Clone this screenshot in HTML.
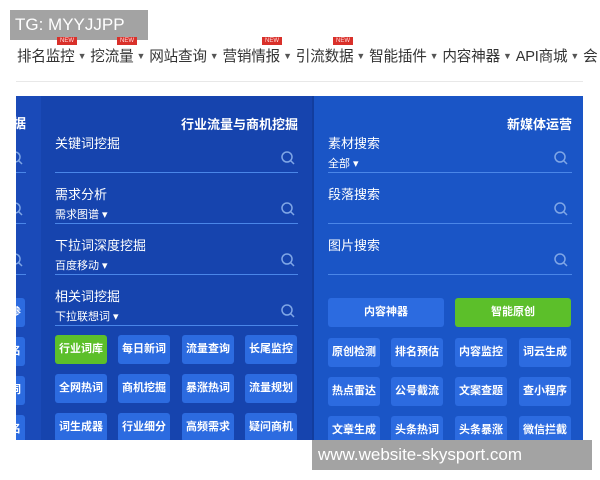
<!DOCTYPE html>
<html><head><meta charset="utf-8"><style>
*{margin:0;padding:0;box-sizing:border-box}
body{width:600px;height:480px;background:#fff;position:relative;overflow:hidden;font-family:"Liberation Sans","Noto Sans CJK SC",sans-serif}
.abs{position:absolute}
.tg{left:10px;top:10px;width:138px;height:30px;background:#a3a3a3;color:#fff;font-size:17px;line-height:30px;padding-left:5px}
.nav{left:17px;top:45px;font-size:14.6px;color:#333;white-space:nowrap;letter-spacing:-0.2px}
.nav .ar{font-size:9px;color:#555;margin:0 4px 0 3px;vertical-align:2px}
.badge{position:absolute;top:37px;width:20px;height:8px;background:#d9302a;font-size:6px;color:#fdd;line-height:8px;text-align:center}
.hline{left:16px;top:81px;width:567px;height:1px;background:#e8e8e8}
.left{left:16px;top:96px;width:25px;height:344px;background:#1a4ab8;overflow:hidden}
.mid{left:41px;top:96px;width:271px;height:344px;background:#1644ae}
.sep{left:312px;top:96px;width:2px;height:344px;background:#123d9e}
.right{left:314px;top:96px;width:269px;height:344px;background:#1a55c6}
.h{color:#fff;font-weight:bold;font-size:13px}
.lab{color:#fff;font-size:13px}
.dd{color:#fff;font-size:11px}
.ul{height:1px;background:#4a86e8}
.btn{background:#2c6be0;color:#fff;font-size:11px;font-weight:bold;text-align:center;line-height:29px;height:29px;border-radius:3px}
.g{background:#5cbf2a}
.ft{left:312px;top:440px;width:280px;height:30px;background:#a3a3a3;color:#fff;font-size:17px;line-height:30px;padding-left:6px}
svg.s{position:absolute;width:16px;height:16px}
</style></head><body>
<div class="abs tg">TG: MYYJJPP</div>
<div class="badge" style="left:57px">NEW</div>
<div class="badge" style="left:117px">NEW</div>
<div class="badge" style="left:262px">NEW</div>
<div class="badge" style="left:333px">NEW</div>
<div class="abs nav">排名监控<span class="ar">▼</span>挖流量<span class="ar">▼</span>网站查询<span class="ar">▼</span>营销情报<span class="ar">▼</span>引流数据<span class="ar">▼</span>智能插件<span class="ar">▼</span>内容神器<span class="ar">▼</span>API商城<span class="ar">▼</span>会</div>
<div class="abs hline"></div>
<div class="abs left">
<div class="abs h" style="left:-3px;top:17px">据</div>
<svg class="s" style="left:-8px;top:54px" viewBox="0 0 16 16"><circle cx="7" cy="7" r="5" fill="none" stroke="#7fa6e6" stroke-width="1.5"/><path d="M10.5 10.5L14 14" stroke="#7fa6e6" stroke-width="1.5"/></svg>
<svg class="s" style="left:-8px;top:105px" viewBox="0 0 16 16"><circle cx="7" cy="7" r="5" fill="none" stroke="#7fa6e6" stroke-width="1.5"/><path d="M10.5 10.5L14 14" stroke="#7fa6e6" stroke-width="1.5"/></svg>
<svg class="s" style="left:-8px;top:156px" viewBox="0 0 16 16"><circle cx="7" cy="7" r="5" fill="none" stroke="#7fa6e6" stroke-width="1.5"/><path d="M10.5 10.5L14 14" stroke="#7fa6e6" stroke-width="1.5"/></svg>
<div class="abs ul" style="left:0;top:76px;width:10px"></div>
<div class="abs ul" style="left:0;top:127px;width:10px"></div>
<div class="abs ul" style="left:0;top:178px;width:10px"></div>
<div class="abs btn" style="left:-43px;top:202px;width:52px">关键词参</div>
<div class="abs btn" style="left:-43px;top:241px;width:52px">关键排名</div>
<div class="abs btn" style="left:-43px;top:280px;width:52px">关键热词</div>
<div class="abs btn" style="left:-43px;top:319px;width:52px">关键排名</div>
</div>
<div class="abs mid"></div>
<div class="abs sep"></div>
<div class="abs right"></div>
<!-- mid panel -->
<div class="abs h" style="left:150px;top:114px;width:148px;text-align:right">行业流量与商机挖掘</div>
<div class="abs lab" style="left:55px;top:133px">关键词挖掘</div>
<div class="abs ul" style="left:55px;top:172px;width:243px"></div>
<div class="abs lab" style="left:55px;top:184px">需求分析</div>
<div class="abs dd" style="left:55px;top:206px">需求图谱 ▾</div>
<div class="abs ul" style="left:55px;top:223px;width:243px"></div>
<div class="abs lab" style="left:55px;top:235px">下拉词深度挖掘</div>
<div class="abs dd" style="left:55px;top:257px">百度移动 ▾</div>
<div class="abs ul" style="left:55px;top:274px;width:243px"></div>
<div class="abs lab" style="left:55px;top:286px">相关词挖掘</div>
<div class="abs dd" style="left:55px;top:308px">下拉联想词 ▾</div>
<div class="abs ul" style="left:55px;top:325px;width:243px"></div>
<svg class="s" style="left:280px;top:150px" viewBox="0 0 16 16"><circle cx="7" cy="7" r="5" fill="none" stroke="#7fa6e6" stroke-width="1.5"/><path d="M10.5 10.5L14 14" stroke="#7fa6e6" stroke-width="1.5"/></svg>
<svg class="s" style="left:280px;top:201px" viewBox="0 0 16 16"><circle cx="7" cy="7" r="5" fill="none" stroke="#7fa6e6" stroke-width="1.5"/><path d="M10.5 10.5L14 14" stroke="#7fa6e6" stroke-width="1.5"/></svg>
<svg class="s" style="left:280px;top:252px" viewBox="0 0 16 16"><circle cx="7" cy="7" r="5" fill="none" stroke="#7fa6e6" stroke-width="1.5"/><path d="M10.5 10.5L14 14" stroke="#7fa6e6" stroke-width="1.5"/></svg>
<svg class="s" style="left:280px;top:303px" viewBox="0 0 16 16"><circle cx="7" cy="7" r="5" fill="none" stroke="#7fa6e6" stroke-width="1.5"/><path d="M10.5 10.5L14 14" stroke="#7fa6e6" stroke-width="1.5"/></svg>
<div class="abs btn g" style="left:55px;top:335px;width:52px">行业词库</div>
<div class="abs btn" style="left:118px;top:335px;width:52px">每日新词</div>
<div class="abs btn" style="left:182px;top:335px;width:52px">流量查询</div>
<div class="abs btn" style="left:245px;top:335px;width:52px">长尾监控</div>
<div class="abs btn" style="left:55px;top:374px;width:52px">全网热词</div>
<div class="abs btn" style="left:118px;top:374px;width:52px">商机挖掘</div>
<div class="abs btn" style="left:182px;top:374px;width:52px">暴涨热词</div>
<div class="abs btn" style="left:245px;top:374px;width:52px">流量规划</div>
<div class="abs btn" style="left:55px;top:413px;width:52px">词生成器</div>
<div class="abs btn" style="left:118px;top:413px;width:52px">行业细分</div>
<div class="abs btn" style="left:182px;top:413px;width:52px">高频需求</div>
<div class="abs btn" style="left:245px;top:413px;width:52px">疑问商机</div>
<!-- right panel -->
<div class="abs h" style="left:450px;top:114px;width:122px;text-align:right">新媒体运营</div>
<div class="abs lab" style="left:328px;top:133px">素材搜索</div>
<div class="abs dd" style="left:328px;top:155px">全部 ▾</div>
<div class="abs ul" style="left:328px;top:172px;width:244px"></div>
<div class="abs lab" style="left:328px;top:184px">段落搜索</div>
<div class="abs ul" style="left:328px;top:223px;width:244px"></div>
<div class="abs lab" style="left:328px;top:235px">图片搜索</div>
<div class="abs ul" style="left:328px;top:274px;width:244px"></div>
<svg class="s" style="left:553px;top:150px" viewBox="0 0 16 16"><circle cx="7" cy="7" r="5" fill="none" stroke="#7fa6e6" stroke-width="1.5"/><path d="M10.5 10.5L14 14" stroke="#7fa6e6" stroke-width="1.5"/></svg>
<svg class="s" style="left:553px;top:201px" viewBox="0 0 16 16"><circle cx="7" cy="7" r="5" fill="none" stroke="#7fa6e6" stroke-width="1.5"/><path d="M10.5 10.5L14 14" stroke="#7fa6e6" stroke-width="1.5"/></svg>
<svg class="s" style="left:553px;top:252px" viewBox="0 0 16 16"><circle cx="7" cy="7" r="5" fill="none" stroke="#7fa6e6" stroke-width="1.5"/><path d="M10.5 10.5L14 14" stroke="#7fa6e6" stroke-width="1.5"/></svg>
<div class="abs btn" style="left:328px;top:298px;width:116px">内容神器</div>
<div class="abs btn g" style="left:455px;top:298px;width:116px">智能原创</div>
<div class="abs btn" style="left:328px;top:338px;width:52px">原创检测</div>
<div class="abs btn" style="left:391px;top:338px;width:52px">排名预估</div>
<div class="abs btn" style="left:455px;top:338px;width:52px">内容监控</div>
<div class="abs btn" style="left:519px;top:338px;width:52px">词云生成</div>
<div class="abs btn" style="left:328px;top:377px;width:52px">热点雷达</div>
<div class="abs btn" style="left:391px;top:377px;width:52px">公号截流</div>
<div class="abs btn" style="left:455px;top:377px;width:52px">文案查题</div>
<div class="abs btn" style="left:519px;top:377px;width:52px">查小程序</div>
<div class="abs btn" style="left:328px;top:416px;width:52px">文章生成</div>
<div class="abs btn" style="left:391px;top:416px;width:52px">头条热词</div>
<div class="abs btn" style="left:455px;top:416px;width:52px">头条暴涨</div>
<div class="abs btn" style="left:519px;top:416px;width:52px">微信拦截</div>
<div class="abs" style="left:0;top:440px;width:600px;height:40px;background:#fff"></div>
<div class="abs ft">www.website-skysport.com</div>
</body></html>
